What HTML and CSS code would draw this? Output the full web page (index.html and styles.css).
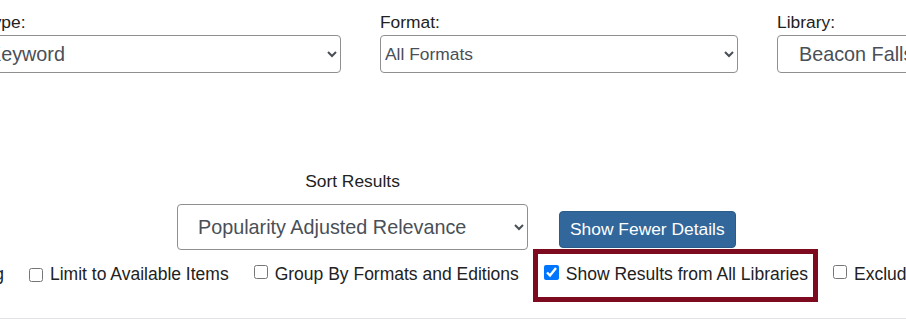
FILE: index.html
```html
<!DOCTYPE html>
<html lang="en">
<head>
<meta charset="utf-8">
<title>Search options</title>
<link rel="stylesheet" href="styles.css">
</head>
<body>
<div class="page">
  <div class="filters">
    <div class="field">
      <label class="field-label" for="type">Type:</label>
      <select id="type" class="control control-lg control-tight">
        <option>Keyword</option>
      </select>
    </div>
    <div class="field">
      <label class="field-label" for="format">Format:</label>
      <select id="format" class="control">
        <option>All Formats</option>
      </select>
    </div>
    <div class="field">
      <label class="field-label" for="library">Library:</label>
      <select id="library" class="control control-lg control-library">
        <option>Beacon Falls Public Library</option>
      </select>
    </div>
  </div>

  <div class="sort">
    <div class="sort-col">
      <label class="sort-label" for="sort">Sort Results</label>
      <select id="sort" class="control control-lg sort-select">
        <option>Popularity Adjusted Relevance</option>
      </select>
    </div>
    <button class="btn-details" type="button">Show Fewer Details</button>
  </div>

  <div class="options">
    <div class="lead-slot">
      <label class="opt"><input type="checkbox"><span>Show Debug Searching</span></label>
    </div>
    <label class="opt opt-low"><input type="checkbox"><span>Limit to Available Items</span></label>
    <label class="opt"><input type="checkbox"><span>Group By Formats and Editions</span></label>
    <label class="opt opt-highlight"><input type="checkbox" checked><span>Show Results from All Libraries</span></label>
    <label class="opt"><input type="checkbox"><span>Exclude Archive Results</span></label>
  </div>

  <div class="rule"></div>
</div>
</body>
</html>
```

FILE: styles.css
```css
* { box-sizing: border-box; }

html, body {
  margin: 0;
  padding: 0;
  background: #ffffff;
  overflow: hidden;
}

body {
  font-family: Arial, "Liberation Sans", sans-serif;
  font-size: 17.4px;
  line-height: 20px;
  color: #222;
}

.page {
  width: 906px;
  height: 325px;
  overflow: hidden;
  padding-top: 12px;
}

.filters {
  display: grid;
  grid-template-columns: 358px 358px 358px;
  column-gap: 39px;
  margin-left: -17px;
}

.field {
  display: flex;
  flex-direction: column;
}

.field-label {
  color: #222;
  height: 20px;
  margin-bottom: 3px;
  white-space: nowrap;
}

.control {
  font-family: Arial, "Liberation Sans", sans-serif;
  font-size: 17.4px;
  color: #4a4f57;
  height: 38px;
  border: 1px solid #8f8f8f;
  border-radius: 4px;
  background: #fff;
  padding: 0 4px 0 0;
  width: 100%;
}

.control-lg { font-size: 19.8px; }
.control-tight { padding-left: 0; }
.control-library { padding-left: 17px; }

.sort {
  display: flex;
  align-items: flex-start;
  margin-top: 98px;
  margin-left: 177px;
  gap: 31px;
}

.sort-col {
  display: flex;
  flex-direction: column;
  align-items: center;
  width: 351px;
}

.sort-label {
  color: #222;
  height: 20px;
  margin-bottom: 13px;
}

.sort-select {
  height: 46px;
  padding-left: 16px;
}

.btn-details {
  margin-top: 40px;
  height: 37px;
  padding: 0 10px;
  background: #31679b;
  color: #fff;
  border: 1px solid #2b5b89;
  border-radius: 4px;
  font-family: Arial, "Liberation Sans", sans-serif;
  font-size: 17.4px;
  white-space: nowrap;
}

.options {
  display: flex;
  align-items: flex-start;
  gap: 25px;
  margin-top: 14px;
  white-space: nowrap;
  font-size: 17.5px;
}

.lead-slot {
  width: 4px;
  flex-shrink: 0;
  display: flex;
  justify-content: flex-end;
}

.opt {
  display: flex;
  align-items: flex-start;
  flex-shrink: 0;
  color: #222;
  height: 20px;
  position: relative;
}

.opt input {
  width: 14px;
  height: 14px;
  margin: 0 7px 0 0;
  flex-shrink: 0;
  position: relative;
  top: 1px;
}

.opt-low input { top: 4px; }

.opt-highlight input {
  width: 15px;
  height: 15px;
}

.opt-highlight::after {
  content: "";
  position: absolute;
  left: -11px;
  right: -10px;
  top: -15px;
  bottom: -18px;
  border: 5px solid #7d0a1e;
  pointer-events: none;
}

.rule {
  margin-top: 34px;
  height: 1px;
  background: #e2e2e6;
}
```
